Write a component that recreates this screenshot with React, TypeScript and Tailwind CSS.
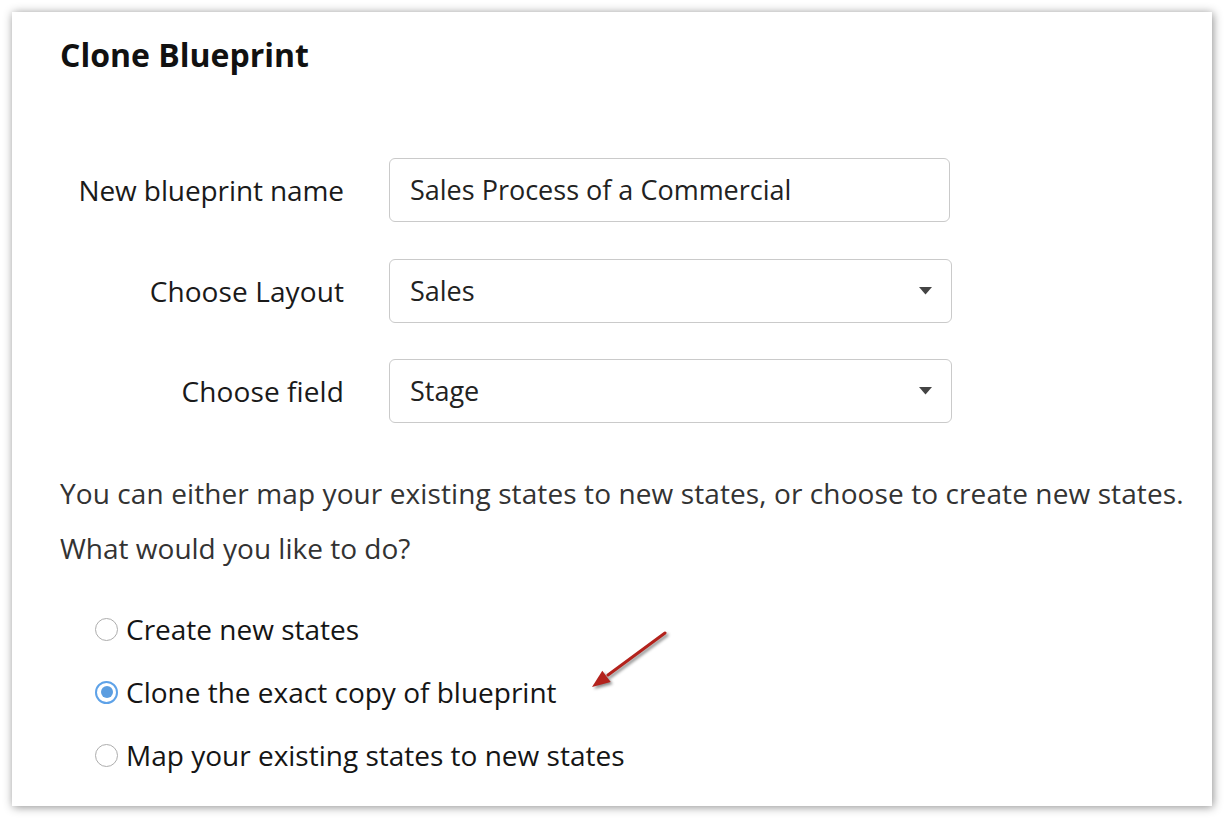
import { useState } from "react";

const font = { fontFamily: "'Open Sans', sans-serif" };

function Caret() {
  return (
    <svg width="13" height="8" viewBox="0 0 13 8" className="shrink-0">
      <path d="M0 0 L13 0 L6.5 7.5 Z" fill="#444" />
    </svg>
  );
}

function Radio({ checked }: { checked: boolean }) {
  return checked ? (
    <span className="flex h-[23px] w-[23px] shrink-0 items-center justify-center rounded-full border-2 border-[#5ea2e8] bg-white">
      <span className="h-[12px] w-[12px] rounded-full bg-[#5b9de0]" />
    </span>
  ) : (
    <span className="h-[23px] w-[23px] shrink-0 rounded-full border-[1.5px] border-[#adadad] bg-white" />
  );
}

export default function App() {
  const [choice, setChoice] = useState("clone");
  const options = [
    { id: "create", label: "Create new states" },
    { id: "clone", label: "Clone the exact copy of blueprint" },
    { id: "map", label: "Map your existing states to new states" },
  ];

  return (
    <div className="min-h-screen bg-white p-3" style={font}>
      <div className="relative h-[794px] w-[1200px] bg-white pl-12 pt-[25px] shadow-[1px_1px_9px_rgba(0,0,0,0.45)]">
        {/* Title */}
        <h1 className="text-[32px] font-bold leading-[36px] text-[#111]">Clone Blueprint</h1>

        {/* Form */}
        <div className="mt-[85px] flex flex-col gap-[37px]">
          <div className="flex items-center">
            <label className="w-[284px] text-right text-[28px] tracking-[-0.1px] text-[#1a1a1a]">New blueprint name</label>
            <div className="ml-[45px] flex h-[64px] w-[561px] items-center rounded-md border border-[#cacaca] pl-5 text-[27px] text-[#222]">
              Sales Process of a Commercial
            </div>
          </div>
          <div className="flex items-center">
            <label className="w-[284px] text-right text-[28px] tracking-[0.1px] text-[#1a1a1a]">Choose Layout</label>
            <div className="ml-[45px] flex h-[64px] w-[563px] items-center justify-between rounded-md border border-[#cacaca] pl-5 pr-[19px] text-[27px] text-[#222]">
              <span>Sales</span>
              <Caret />
            </div>
          </div>
          <div className="-mt-px flex items-center">
            <label className="w-[284px] text-right text-[28px] tracking-[0.1px] text-[#1a1a1a]">Choose field</label>
            <div className="ml-[45px] flex h-[64px] w-[563px] items-center justify-between rounded-md border border-[#cacaca] pl-5 pr-[19px] text-[27px] text-[#222]">
              <span>Stage</span>
              <Caret />
            </div>
          </div>
        </div>

        {/* Description */}
        <p className="mt-[52px] whitespace-nowrap text-[28px] leading-[36px] tracking-[0.1px] text-[#333]">
          You can either map your existing states to new states, or choose to create new states.
        </p>
        <p className="mt-[19px] text-[28px] leading-[36px] text-[#333]">What would you like to do?</p>

        {/* Options */}
        <div className="mt-[45px] flex flex-col gap-[27px] pl-[35px]">
          {options.map((o) => (
            <button
              key={o.id}
              onClick={() => setChoice(o.id)}
              className="flex h-[36px] items-center gap-[8px] text-left text-[28px] text-[#151515]"
            >
              <Radio checked={choice === o.id} />
              <span>{o.label}</span>
            </button>
          ))}
        </div>

        {/* Annotation arrow */}
        <svg
          className="absolute left-[563px] top-[603px]"
          width="100"
          height="90"
          viewBox="0 0 100 90"
          style={{ filter: "drop-shadow(2px 2px 1.5px rgba(0,0,0,0.45))" }}
        >
          <line x1="90" y1="18" x2="33" y2="60" stroke="#b3221c" strokeWidth="3" strokeLinecap="round" />
          <path d="M17 72 L27.3 55.7 L35.7 66.9 Z" fill="#b3221c" />
        </svg>
      </div>
    </div>
  );
}
